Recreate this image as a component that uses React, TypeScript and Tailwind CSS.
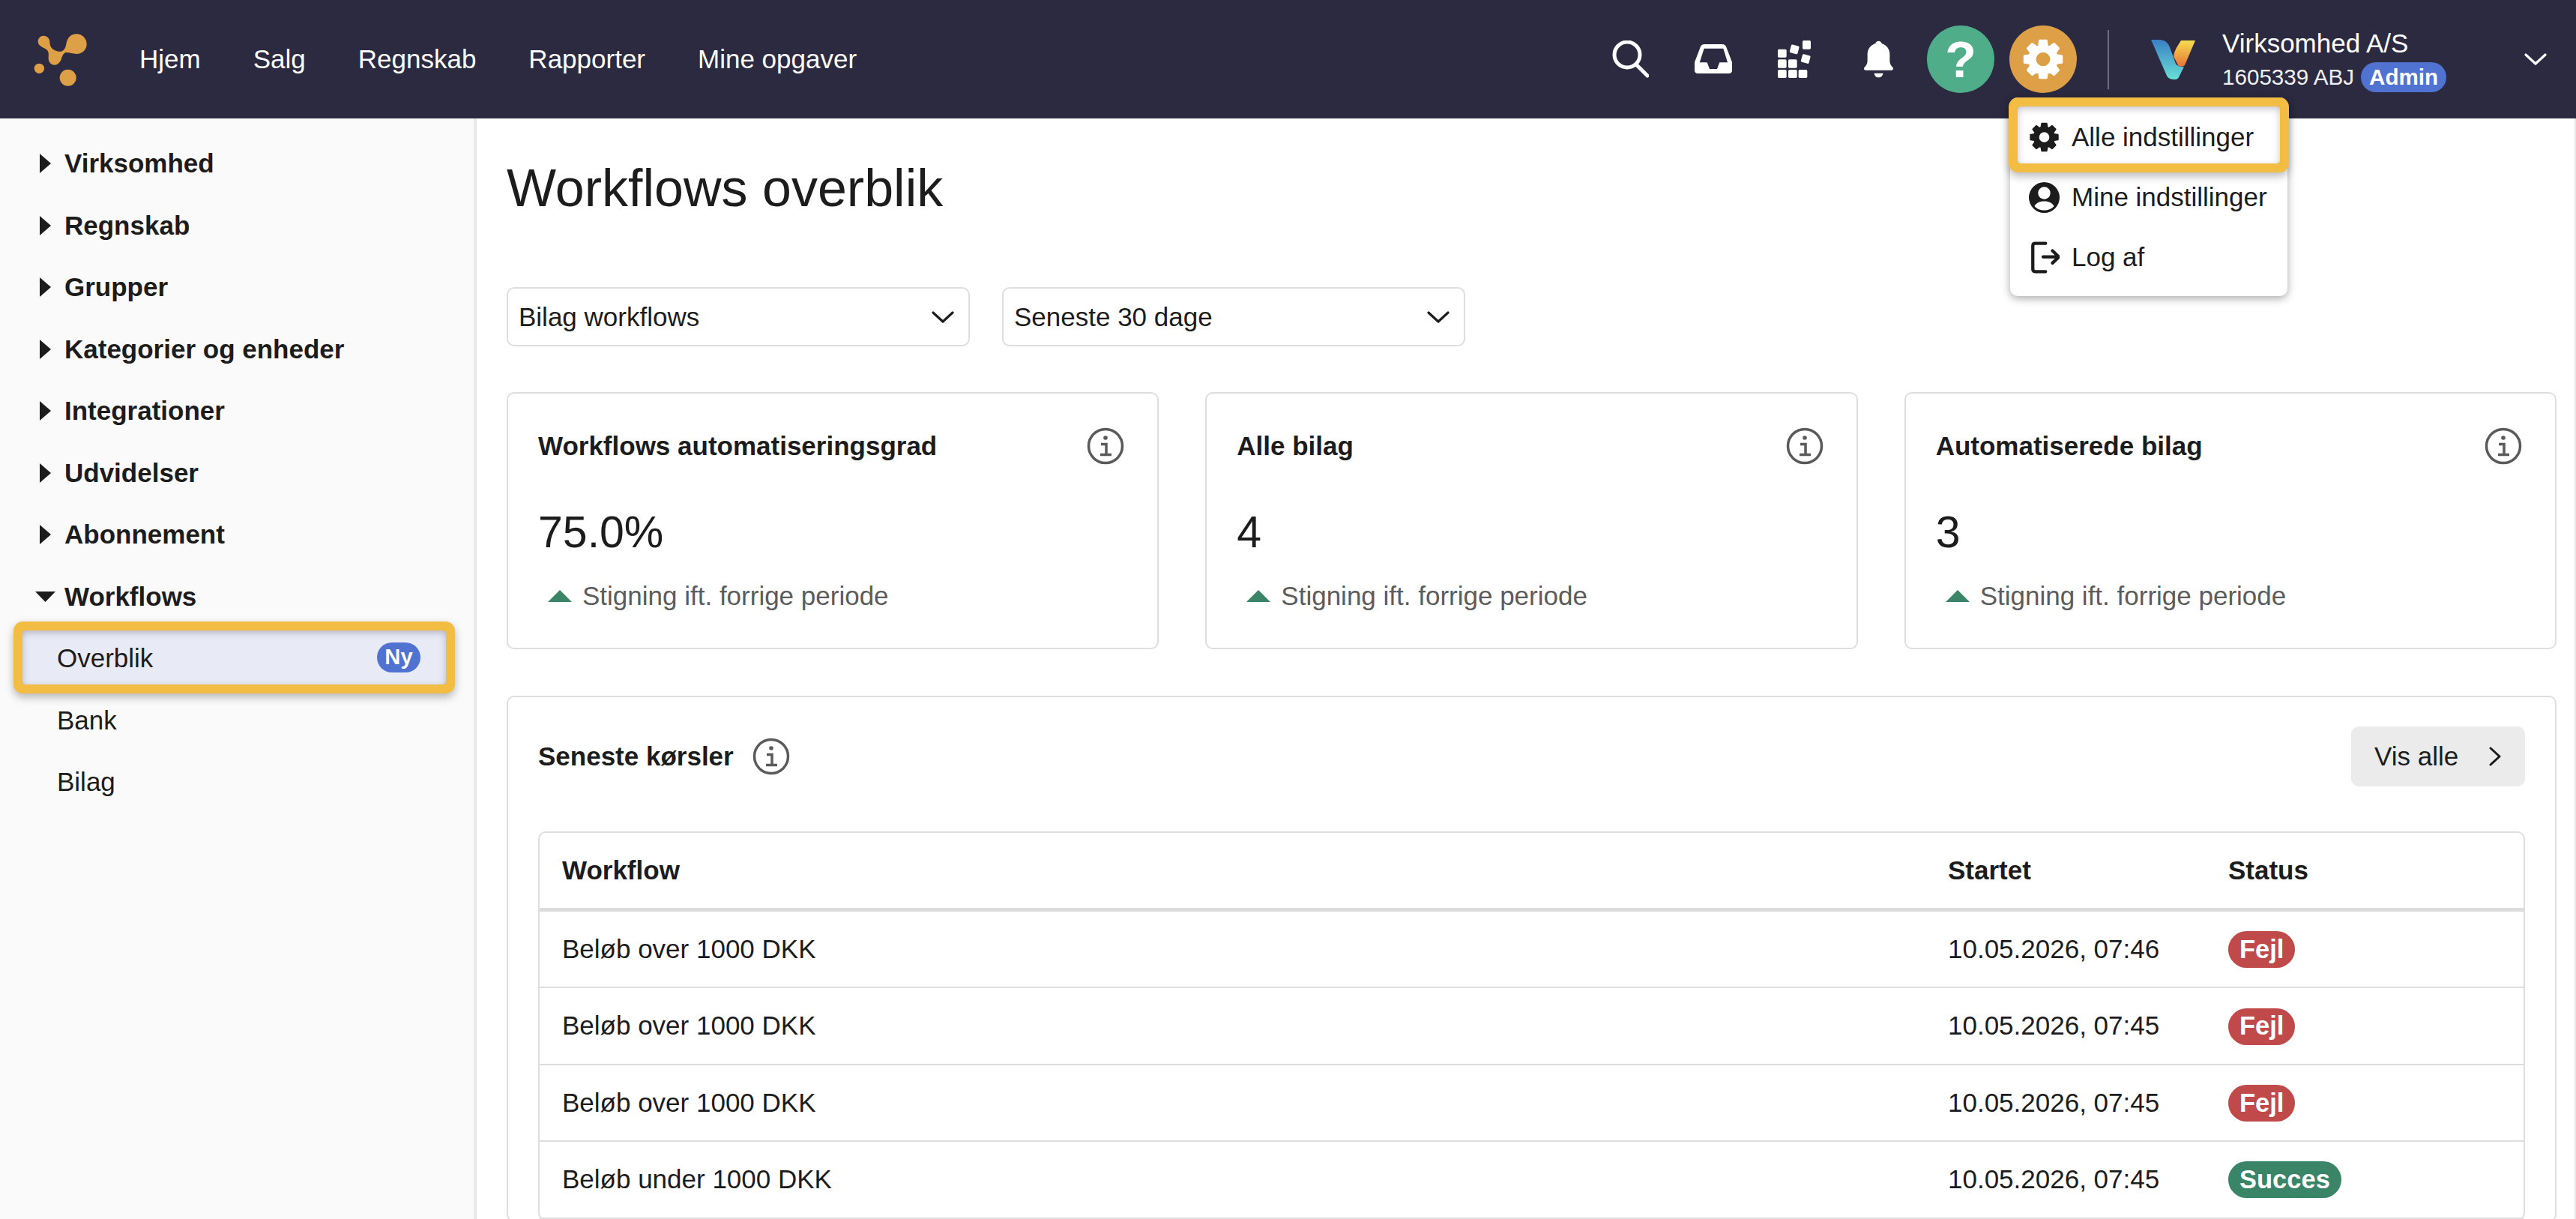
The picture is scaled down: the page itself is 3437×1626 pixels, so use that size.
import React from 'react'

const navItems = ['Hjem', 'Salg', 'Regnskab', 'Rapporter', 'Mine opgaver']
const sideItems = ['Virksomhed', 'Regnskab', 'Grupper', 'Kategorier og enheder', 'Integrationer', 'Udvidelser', 'Abonnement']
const cards = [
    { title: 'Workflows automatiseringsgrad', value: '75.0%' },
    { title: 'Alle bilag', value: '4' },
    { title: 'Automatiserede bilag', value: '3' },
]
const rows = [
    { name: 'Beløb over 1000 DKK', started: '10.05.2026, 07:46', status: 'Fejl' },
    { name: 'Beløb over 1000 DKK', started: '10.05.2026, 07:45', status: 'Fejl' },
    { name: 'Beløb over 1000 DKK', started: '10.05.2026, 07:45', status: 'Fejl' },
    { name: 'Beløb under 1000 DKK', started: '10.05.2026, 07:45', status: 'Succes' },
]

// gear outline, 8 teeth, drawn in a 60x60 box
const gearPath = () => {
    const pts: string[] = []
    for (let i = 0; i < 8; i++) {
        const a = (i * Math.PI) / 4
        const add = (r: number, d: number) => {
            const t = a + (d * Math.PI) / 180
            pts.push(`${(30 + r * Math.sin(t)).toFixed(2)} ${(30 - r * Math.cos(t)).toFixed(2)}`)
        }
        add(20, -17)
        add(27, -10)
        add(27, 10)
        add(20, 17)
    }
    return `M${pts.join('L')}Z M30 18.5 A11.5 11.5 0 1 0 30 41.5 A11.5 11.5 0 1 0 30 18.5Z`
}

const Gear = ({ size, color }: { size: number; color: string }) => (
    <svg width={size} height={size} viewBox="0 0 60 60">
        <path d={gearPath()} fill={color} stroke={color} strokeWidth="3" strokeLinejoin="round" fillRule="evenodd" />
    </svg>
)

const InfoIcon = () => (
    <svg width="50" height="50" viewBox="0 0 50 50" fill="none" stroke="#5a5a5a" strokeWidth="3.5">
        <circle cx="25" cy="25" r="22.5" />
        <circle cx="25" cy="14" r="2.8" fill="#5a5a5a" stroke="none" />
        <path d="M19 22.5H26V36M18 36.5H33" />
    </svg>
)

const Chevron = ({ color = '#1c1c1c' }: { color?: string }) => (
    <svg width="30" height="16" viewBox="0 0 30 16" fill="none" stroke={color} strokeWidth="3.2" strokeLinecap="round" strokeLinejoin="round">
        <path d="M2 2L15 14L28 2" />
    </svg>
)

const Logo = () => (
    <svg width="75" height="75" viewBox="100 90 225 225" fill="#dda047">
        <path d="M146 107C160 107 170 118 170 132C170 145 175 165 205 170C225 172 232 160 236 140C240 115 255 100 277 100C300 100 318 118 318 140C318 162 300 180 277 180C260 180 245 172 232 175C222 180 218 195 215 205C208 218 200 224 190 224C175 224 165 212 165 198C165 185 168 175 160 165C152 155 123 152 123 130C123 117 133 107 146 107Z" />
        <circle cx="128" cy="238" r="20" />
        <circle cx="243" cy="275" r="33" />
    </svg>
)

const HeaderIcons = () => (
    <div className="flex items-center">
        <svg width="50" height="50" viewBox="0 0 50 50" fill="none" stroke="#fff" strokeWidth="5" strokeLinecap="round">
            <circle cx="21" cy="19" r="17" />
            <path d="M33 32L48 47" />
        </svg>
        <svg className="ml-[61px]" width="50" height="40" viewBox="0 0 50 40">
            <path
                fill="#fff"
                fillRule="evenodd"
                d="M13 0H37C39 0 41 1 42 3L50 24V35C50 37.500 48 39 46 39H4C2 39 0 37.500 0 35V24L8 3C9 1 11 0 13 0ZM12.700 5.700L6.700 24.300H16.700L20 33H30L33.300 24.300H44L38.300 5.700Z"
            />
        </svg>
        <svg className="ml-[61px]" width="45" height="50" viewBox="0 0 135 150" fill="#fff">
            <rect x="0" y="35" width="35" height="33" rx="5" />
            <rect x="0" y="76" width="35" height="34" rx="5" />
            <rect x="42" y="76" width="35" height="34" rx="5" />
            <rect x="0" y="117" width="35" height="33" rx="5" />
            <rect x="42" y="117" width="35" height="33" rx="5" />
            <rect x="83" y="117" width="35" height="33" rx="5" />
            <rect x="50" y="19" width="33" height="33" rx="5" transform="rotate(15 66 36)" />
            <rect x="99" y="0" width="33" height="35" rx="5" />
            <rect x="95" y="57" width="33" height="33" rx="5" transform="rotate(15 111 74)" />
        </svg>
        <svg className="ml-[70px]" width="39" height="50" viewBox="0 0 118 147" fill="#fff">
            <path d="M59 0C66 0 70 4 72 10C92 16 104 34 104 54V80C104 92 110 100 116 106C120 110 118 118 112 118H6C0 118 -2 110 2 106C8 100 14 92 14 80V54C14 34 26 16 46 10C48 4 52 0 59 0Z" />
            <path d="M41 130H77C75 142 68 147 59 147C50 147 43 142 41 130Z" />
        </svg>
        <div className="ml-[45px] w-[90px] h-[90px] rounded-full bg-[#4fad8a] flex items-center justify-center text-white font-bold text-[68px] leading-none">?</div>
        <div className="ml-[20px] w-[90px] h-[90px] rounded-full bg-[#dda047] flex items-center justify-center">
            <Gear size={56} color="#fff" />
        </div>
        <div className="ml-[41px] w-[2px] h-[79px] bg-[#6f6e80]" />
        <svg className="ml-[56px]" width="59" height="53" viewBox="0 0 59 53">
            <defs>
                <linearGradient id="vLeft" x1="0" y1="0" x2="0" y2="1">
                    <stop offset="0" stopColor="#3b7fc4" />
                    <stop offset="1" stopColor="#68e0d6" />
                </linearGradient>
                <linearGradient id="vRight" x1="0" y1="0" x2="0" y2="1">
                    <stop offset="0" stopColor="#f6de4e" />
                    <stop offset="1" stopColor="#e8753a" />
                </linearGradient>
            </defs>
            <path fill="url(#vLeft)" d="M0 0H11C18 0 23 4 25 10L33 32C35 35 39 36 44 36L38 48C37 51 35 53 32 53C27 53 23 52 21 48Z" />
            <path fill="url(#vRight)" d="M40 1H59L45 34C42 36 38 36 36 34L30 22C31 16 33 12 35 9Z" />
        </svg>
        <div className="ml-[36px] w-[403px] flex flex-col text-white mt-[3px]">
            <div className="h-[40px] leading-[40px] text-[35px]">Virksomhed A/S</div>
            <div className="mt-[5px] h-[40px] flex items-center text-[29.6px] text-[#f0f0f0]">
                1605339 ABJ
                <span className="ml-[9px] h-[40px] w-[114px] rounded-full bg-[#5072d0] flex items-center justify-center font-bold text-white">Admin</span>
            </div>
        </div>
        <Chevron color="#fff" />
    </div>
)

const Highlight = ({ className }: { className: string }) => (
    <div
        className={`absolute pointer-events-none rounded-[4px] shadow-[inset_0_3px_10px_rgba(60,60,80,0.3),0_0_0_12px_#f2bd42,0_5px_12px_12px_rgba(0,0,0,0.28)] ${className}`}
    />
)

const SettingsMenu = () => (
    <div className="absolute z-10 top-[130px] right-[385px] w-[370px] h-[265px] pt-[13px] bg-white rounded-[10px] shadow-[0_3px_12px_rgba(0,0,0,0.35)] text-[35px] text-[#1c1c1c]">
        <div className="relative h-[80px] pl-[25px] flex items-center">
            <div className="w-[41px] flex justify-center">
                <Gear size={46} color="#1c1c1c" />
            </div>
            <span className="ml-[16px]">Alle indstillinger</span>
            <Highlight className="left-[10px] right-[10px] top-[-1px] bottom-[5px]" />
        </div>
        <div className="h-[80px] pl-[25px] flex items-center">
            <svg width="41" height="41" viewBox="0 0 41 41">
                <circle cx="20.5" cy="20.500" r="20.500" fill="#1c1c1c" />
                <circle cx="20.5" cy="14.500" r="8.200" fill="#fff" />
                <path fill="#fff" d="M7.500 32C10 27 15 25.500 20.500 25.500C26 25.500 31 27 33.500 32C30 36 25.500 37.500 20.500 37.500C15.500 37.500 11 36 7.500 32Z" />
            </svg>
            <span className="ml-[16px]">Mine indstillinger</span>
        </div>
        <div className="h-[80px] pl-[25px] flex items-center">
            <svg width="41" height="45" viewBox="50 515 125 135" fill="none" stroke="#1c1c1c" strokeWidth="13" strokeLinecap="round" strokeLinejoin="round">
                <path d="M118 525H76Q66 525 66 535V630Q66 640 76 640H118" />
                <path d="M108 580H172M146 555L172 580L146 605" />
            </svg>
            <span className="ml-[16px]">Log af</span>
        </div>
    </div>
)

const Sidebar = () => (
    <aside className="w-[636px] h-full shrink-0 bg-[#fafafa] border-r-4 border-[#e8e8e8] pt-[19px] text-[35px] text-[#1c1c1c]">
        {sideItems.map((item) => (
            <div key={item} className="h-[82.5px] flex items-center pl-[40px] font-bold">
                <span className="w-[40px] flex justify-center">
                    <svg width="15" height="26" viewBox="0 0 15 26"><path d="M0 0L15 13L0 26Z" fill="#1c1c1c" /></svg>
                </span>
                <span className="ml-[6px]">{item}</span>
            </div>
        ))}
        <div className="h-[82.5px] flex items-center pl-[40px] font-bold">
            <span className="w-[40px] flex justify-center">
                <svg width="27" height="14" viewBox="0 0 27 14"><path d="M0 0H27L13.500 14Z" fill="#1c1c1c" /></svg>
            </span>
            <span className="ml-[6px]">Workflows</span>
        </div>
        <div className="h-[82.5px] py-[4px] pl-[30px] pr-[37px]">
            <div className="relative h-[72px] bg-[#e8ebf5] rounded-[4px] pl-[46px] pr-[34px] flex items-center justify-between">
                <span className="mt-[3px]">Overblik</span>
                <span className="w-[58px] h-[40px] rounded-full bg-[#5072d0] text-white font-bold text-[29.2px] flex items-center justify-center">Ny</span>
                <Highlight className="inset-0" />
            </div>
        </div>
        <div className="h-[82.5px] flex items-center pl-[76px]">Bank</div>
        <div className="h-[82.5px] flex items-center pl-[76px]">Bilag</div>
    </aside>
)

const SelectBox = ({ label }: { label: string }) => (
    <div className="w-[618px] h-[79px] border-2 border-[#dedede] rounded-[10px] pl-[14px] pr-[19px] flex items-center justify-between text-[35px] text-[#1c1c1c]">
        <span className="mt-[2px]">{label}</span>
        <Chevron />
    </div>
)

const StatCard = ({ title, value }: { title: string; value: string }) => (
    <div className="h-[343px] border-2 border-[#dedede] rounded-[10px] pt-[45px] pl-[40px] pr-[44px]">
        <div className="h-[50px] flex items-center justify-between">
            <span className="font-bold text-[35px]">{title}</span>
            <InfoIcon />
        </div>
        <div className="mt-[55px] h-[70px] leading-[70px] text-[59px]">{value}</div>
        <div className="mt-[30px] h-[40px] pl-[13px] flex items-center text-[35px] text-[#5c5c5c]">
            <svg width="32" height="16" viewBox="0 0 32 16"><path d="M16 0L32 16H0Z" fill="#3a8468" /></svg>
            <span className="ml-[14px]">Stigning ift. forrige periode</span>
        </div>
    </div>
)

const App = () => {
    return (
        <div className="relative w-[3437px] h-[1626px] overflow-hidden bg-white flex flex-col font-['Liberation_Sans',Arial,sans-serif] text-[#1c1c1c]">
            <header className="relative h-[158px] shrink-0 bg-[#2b2a40] flex items-center justify-between pl-[43px] pr-[39px]">
                <div className="flex items-center">
                    <Logo />
                    <nav className="ml-[68px] flex items-center gap-[70px] text-[35px] text-white">
                        {navItems.map((item) => (
                            <span key={item}>{item}</span>
                        ))}
                    </nav>
                </div>
                <HeaderIcons />
                <SettingsMenu />
            </header>

            <div className="flex-1 min-h-0 flex">
                <Sidebar />
                <main className="flex-1 h-full border-r-2 border-[#e8e8e8] pl-[40px] pr-[24px] overflow-hidden">
                    <h1 className="mt-[54px] h-[79px] leading-[79px] text-[70px] font-normal">Workflows overblik</h1>

                    <div className="mt-[92px] flex gap-[43px]">
                        <SelectBox label="Bilag workflows" />
                        <SelectBox label="Seneste 30 dage" />
                    </div>

                    <div className="mt-[61px] grid grid-cols-3 gap-[62px]">
                        {cards.map((c) => (
                            <StatCard key={c.title} title={c.title} value={c.value} />
                        ))}
                    </div>

                    <section className="mt-[62px] border-2 border-[#dedede] rounded-[10px] pt-[39px] px-[40px]">
                        <div className="flex items-center justify-between h-[80px]">
                            <div className="flex items-center">
                                <span className="font-bold text-[35px]">Seneste kørsler</span>
                                <span className="ml-[25px] flex"><InfoIcon /></span>
                            </div>
                            <div className="w-[232px] h-[80px] bg-[#ebebeb] rounded-[10px] pl-[31px] pr-[32px] flex items-center justify-between text-[35px]">
                                <span>Vis alle</span>
                                <svg width="16" height="26" viewBox="0 0 16 26" fill="none" stroke="#1c1c1c" strokeWidth="3" strokeLinecap="round" strokeLinejoin="round">
                                    <path d="M2 2L14 13L2 24" />
                                </svg>
                            </div>
                        </div>

                        <div className="mt-[60px] border-2 border-[#dedede] rounded-[10px] text-[35px]">
                            <div className="h-[105px] pl-[30px] grid grid-cols-[1849px_374px_1fr] items-center font-bold border-b-[5px] border-[#dcdcdc]">
                                <span>Workflow</span>
                                <span>Startet</span>
                                <span>Status</span>
                            </div>
                            {rows.map((row, i) => (
                                <div key={i} className="h-[102.4px] pl-[30px] grid grid-cols-[1849px_374px_1fr] items-center border-b-2 border-[#dedede]">
                                    <span>{row.name}</span>
                                    <span>{row.started}</span>
                                    <span>
                                        <span className={`inline-flex items-center h-[49px] px-[15px] rounded-full text-white font-bold text-[34.500px] ${row.status === 'Fejl' ? 'bg-[#c0494a]' : 'bg-[#3a8468]'}`}>
                                            {row.status}
                                        </span>
                                    </span>
                                </div>
                            ))}
                        </div>
                    </section>
                </main>
            </div>
        </div>
    )
}

export default App
